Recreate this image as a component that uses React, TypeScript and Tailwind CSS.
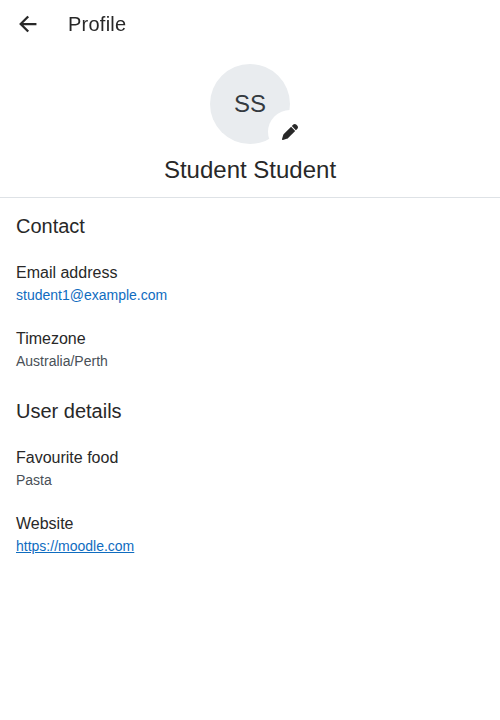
const sections = [
  {
    title: 'Contact',
    items: [
      { label: 'Email address', value: 'student1@example.com', style: 'text-[#0f6cbf]' },
      { label: 'Timezone', value: 'Australia/Perth', style: 'text-[#495057]' },
    ],
  },
  {
    title: 'User details',
    items: [
      { label: 'Favourite food', value: 'Pasta', style: 'text-[#495057]' },
      { label: 'Website', value: 'https://moodle.com', style: 'text-[#0f6cbf] underline' },
    ],
  },
];

export default function App() {
  return (
    <div className="min-h-screen bg-white font-['Liberation_Sans',Arial,sans-serif] text-[#282828]">
      <header className="flex h-12 items-center pl-4 will-change-transform">
        <button aria-label="Back" className="flex size-6 items-center justify-center">
          <svg viewBox="0 0 512 512" className="size-6" fill="none" stroke="currentColor" strokeWidth="48" strokeLinecap="square" strokeLinejoin="miter">
            <path d="M244 400L100 256l144-144M120 256h292" />
          </svg>
        </button>
        <h1 className="ml-7 text-xl leading-6 tracking-[0.0125em]">Profile</h1>
      </header>
      <div className="flex h-[150px] flex-col items-center border-b border-[#dee2e6] pt-4">
        <div className="relative flex size-20 items-center justify-center rounded-full bg-[#e9ecef] text-2xl text-[#343a40]">
          SS
          <button aria-label="Edit" className="absolute top-[46px] left-[58px] flex size-11 items-center justify-center rounded-full bg-white text-[#282828]">
            <svg viewBox="0 0 512 512" className="size-4" fill="currentColor">
              <path d="M362.7 19.3L314.3 67.7 444.3 197.7l48.4-48.4c25-25 25-65.500 0-90.500L453.300 19.300c-25-25-65.500-25-90.500 0zm-71 71L58.600 323.500c-10.400 10.400-18 23.300-22.200 37.400L1 481.200C-1.500 489.700.800 498.800 7 505s15.300 8.500 23.700 6.100l120.300-35.400c14.100-4.200 27-11.800 37.400-22.200L421.700 220.300 291.700 90.300z" />
            </svg>
          </button>
        </div>
        <h2 className="mt-2.5 text-2xl leading-8">Student Student</h2>
      </div>
      <main className="px-4 pt-4">
        {sections.map((section) => (
          <section key={section.title} className="mb-[13px]">
            <h3 className="mb-4 text-xl leading-6">{section.title}</h3>
            {section.items.map((item) => (
              <div key={item.label} className="h-[66px] pt-[7px]">
                <p className="text-base leading-6">{item.label}</p>
                <p className={'text-sm leading-5 ' + item.style}>{item.value}</p>
              </div>
            ))}
          </section>
        ))}
      </main>
    </div>
  );
}
